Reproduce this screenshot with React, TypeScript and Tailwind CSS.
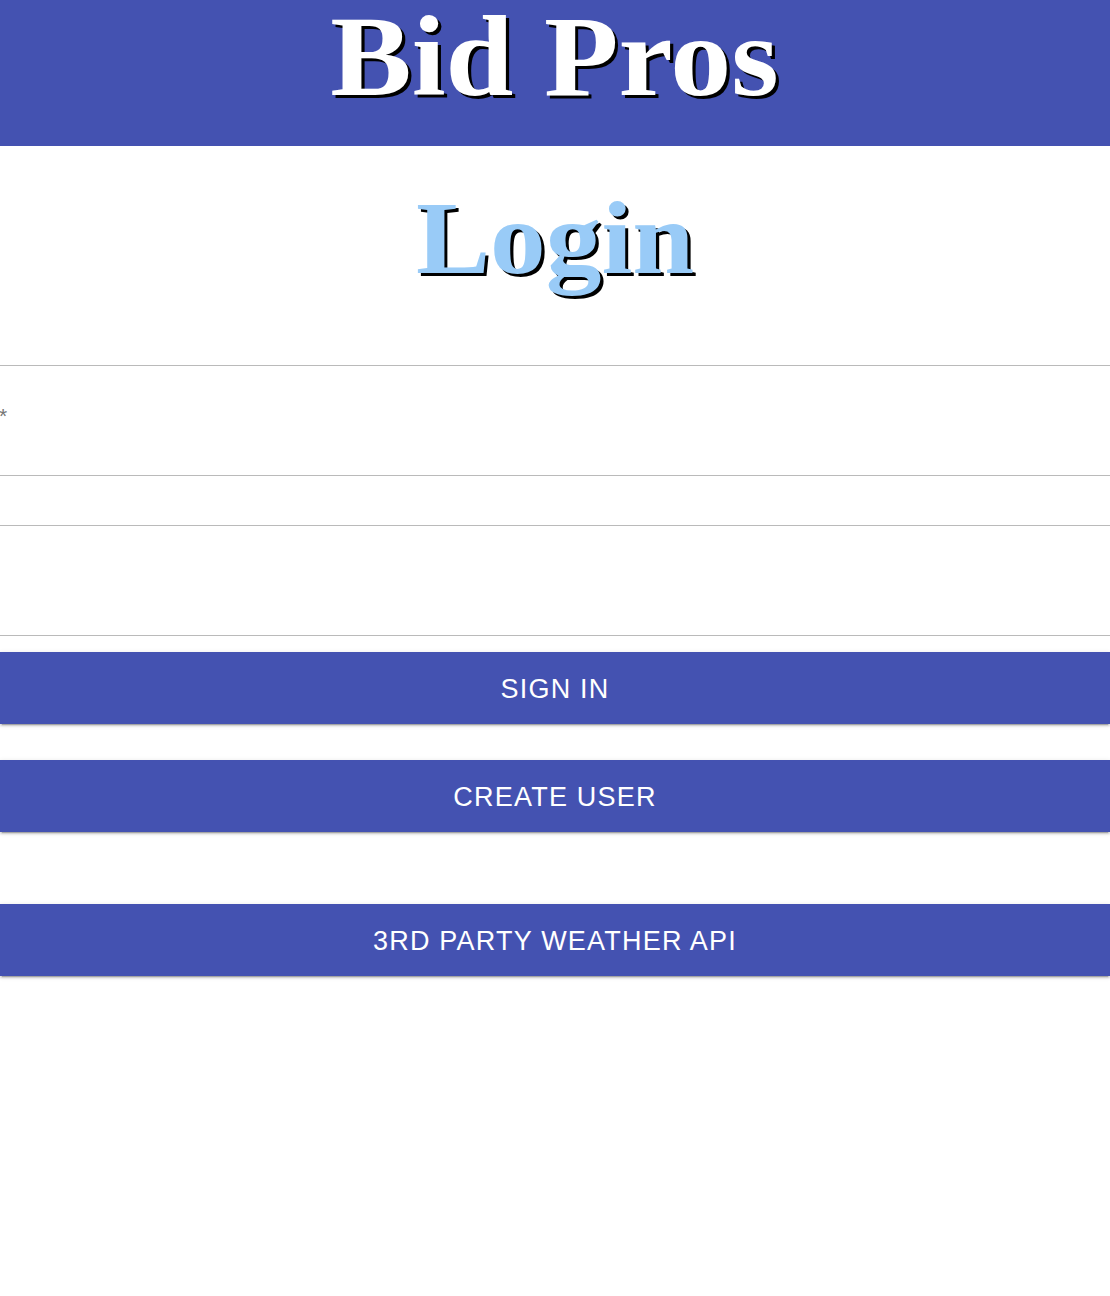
import React from 'react';

const serif = "font-['Liberation_Serif','Times_New_Roman',serif]";
const sans = "font-['Liberation_Sans',Arial,sans-serif]";

const buttonClass =
  `block w-full h-[72px] pt-[3px] bg-[#4452b1] text-white text-[27px] tracking-[0.045em] uppercase ${sans} shadow-[0_3px_1px_-2px_rgba(0,0,0,0.2),0_2px_2px_0_rgba(0,0,0,0.14),0_1px_5px_0_rgba(0,0,0,0.12)]`;

const App = () => {
  return (
    <div className="min-h-[1296px] bg-white">
      {/* header */}
      <header className="h-[146px] bg-[#4452b1] flex justify-center">
        <h1
          className={`${serif} font-bold text-[114px] leading-[0.95] text-white mt-[3px] scale-x-[1.07] [text-shadow:3px_3px_0_#000]`}
        >
          Bid Pros
        </h1>
      </header>

      <div className="h-[219px] flex justify-center">
        <h2
          className={`${serif} font-bold text-[104px] leading-[0.95] text-[#99cbf7] mt-[43px] scale-x-[1.07] [text-shadow:3px_3px_0_#000]`}
        >
          Login
        </h2>
      </div>

      {/* form */}
      <form>
        <div className="border-t border-[#bababa]">
          <div className="h-[110px] border-b border-[#bababa] relative">
            <label className={`${sans} absolute left-[-1px] top-[34px] text-[21px] text-[#757575]`}>*</label>
            <input className="w-full h-full outline-none bg-transparent" />
          </div>
          <div className="h-[50px] border-b border-[#bababa]">
            <input className="w-full h-full outline-none bg-transparent" />
          </div>
          <div className="h-[110px] border-b border-[#bababa]">
            <input type="password" className="w-full h-full outline-none bg-transparent" />
          </div>
        </div>

        <div className="mt-[16px]">
          <button type="button" className={buttonClass}>Sign In</button>
        </div>
        <div className="mt-[36px]">
          <button type="button" className={buttonClass}>Create User</button>
        </div>
      </form>

      <div className="mt-[72px]">
        <button type="button" className={buttonClass}>3rd Party Weather API</button>
      </div>
    </div>
  );
};

export default App;
